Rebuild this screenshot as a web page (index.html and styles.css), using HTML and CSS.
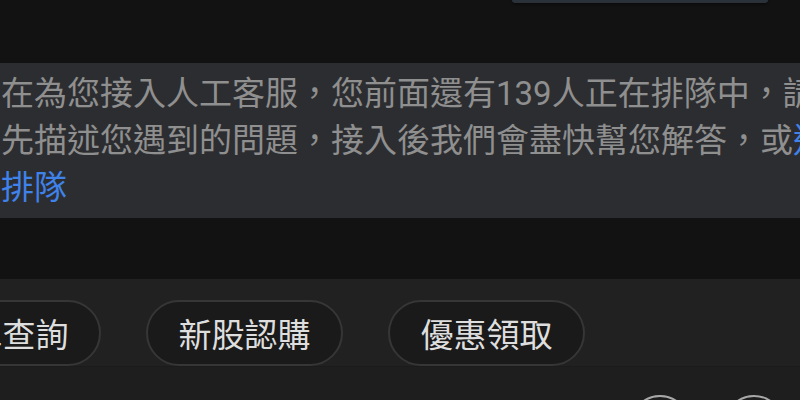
FILE: index.html
```html
<!DOCTYPE html>
<html lang="zh-Hant">

<head>
    <meta name="viewport" content="width=device-width, initial-scale=1.0">
    <title>客服</title>
    <link rel="stylesheet" href="styles.css">
</head>
<body>

    <!-- Previous message (user bubble, mostly scrolled away) -->
    <div class="top-row">
        <div class="bubble-end"></div>
    </div>

    <!-- Queue notice -->
    <div class="notice">
        <p class="notice-text">在為您接入人工客服，您前面還有139人正在排隊中，請您先描述您遇到的問題，接入後我們會盡快幫您解答，或<a class="link" href="#">退出排隊</a></p>
    </div>

    <!-- Bottom panel -->
    <div class="panel">
        <div class="chips">
            <button class="chip">訂單查詢</button>
            <button class="chip">新股認購</button>
            <button class="chip">優惠領取</button>
        </div>
        <div class="tools">
            <span class="round-btn"></span>
            <span class="round-btn"></span>
        </div>
    </div>

</body>

</html>
```

FILE: styles.css
```css
/* General */
body {
    margin: 0;
    width: 800px;
    height: 400px;
    overflow: hidden;
    background-color: #121212;
    font-family: Roboto, 'Noto Sans CJK TC', sans-serif;
}

/* Top bubble edge */
.top-row {
    height: 63px;
    display: flex;
    justify-content: flex-end;
    padding-right: 32px;
}

.bubble-end {
    width: 256px;
    height: 3px;
    background-color: #2b3139;
    border-radius: 0 0 10px 10px;
    box-shadow: 0 1px 3px rgba(0, 0, 0, 0.6);
}

/* Notice */
.notice {
    background-color: #2c2d30;
    padding: 7px 0 7px 1px;
}

.notice-text {
    width: 866px;
    margin: 0;
    font-size: 33px;
    line-height: 47px;
    color: #8f8f8f;
}

.link {
    color: #3f82ea;
    text-decoration: none;
}

/* Bottom panel */
.panel {
    margin-top: 61px;
    background-color: #1e1e1e;
}

.chips {
    display: flex;
    gap: 45px;
    margin-left: -96px;
    padding: 21px 0 0;
    height: 66px;
    background-color: #212121;
    border-bottom: 1px solid #1b1b1b;
}

.chip {
    flex: none;
    width: 197px;
    height: 66px;
    background-color: #1a1a1a;
    border: 2px solid #363636;
    border-radius: 33px;
    color: #dedede;
    font-family: inherit;
    font-size: 33px;
    padding: 0;
}

.tools {
    display: flex;
    justify-content: flex-end;
    gap: 34px;
    padding: 28px 16px 0 0;
}

.round-btn {
    width: 60px;
    height: 60px;
    border: 2px solid #a8a8a8;
    border-radius: 50%;
    box-sizing: border-box;
}
```
